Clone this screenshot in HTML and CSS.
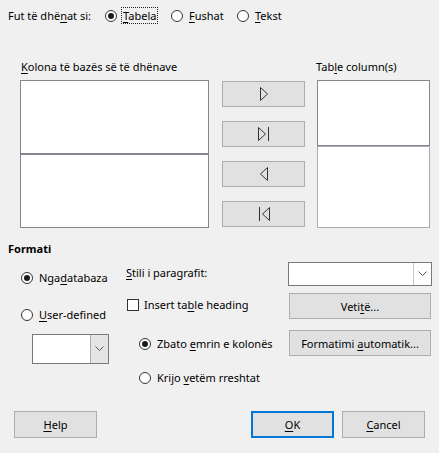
FILE: index.html
```html
<!DOCTYPE html>
<html>
<head>
<meta charset="utf-8">
<link rel="stylesheet" href="styles.css">
</head>
<body>
<div class="dlg">
  <div class="top">
    <span class="top-lbl">Fut të dhë<u>n</u>at si:</span>
    <span class="radio top-item"><span class="rb on"></span><span class="focus"><span><u>T</u>abela</span></span></span>
    <span class="radio top-item"><span class="rb"></span><span class="rtxt"><u>F</u>ushat</span></span>
    <span class="radio"><span class="rb"></span><span class="rtxt"><u>T</u>ekst</span></span>
  </div>

  <div class="cols">
    <div class="col-lbl c1"><u>K</u>olona të bazës së të dhënave</div>
    <div class="col-lbl c3">Tab<u>l</u>e column(s)</div>
    <div class="list left c1">
      <div class="pane lt"></div>
      <div class="pane lb"></div>
    </div>
    <div class="arrows">
      <div class="btn abtn"><svg width="16" height="16" viewBox="0 0 16 16"><polygon points="4.5,1.5 11.5,8 4.5,14.5" fill="none" stroke="#333" stroke-width="1"/></svg></div>
      <div class="btn abtn"><svg width="16" height="16" viewBox="0 0 16 16"><polygon points="2.5,1.5 9.5,8 2.5,14.5" fill="none" stroke="#333" stroke-width="1"/><line x1="12.5" y1="1" x2="12.5" y2="15" stroke="#333" stroke-width="1"/></svg></div>
      <div class="btn abtn"><svg width="16" height="16" viewBox="0 0 16 16"><polygon points="11.5,1.5 4.5,8 11.5,14.5" fill="none" stroke="#333" stroke-width="1"/></svg></div>
      <div class="btn abtn"><svg width="16" height="16" viewBox="0 0 16 16"><line x1="3.5" y1="1" x2="3.5" y2="15" stroke="#333" stroke-width="1"/><polygon points="13.5,1.5 6.5,8 13.5,14.5" fill="none" stroke="#333" stroke-width="1"/></svg></div>
    </div>
    <div class="list right c3">
      <div class="pane rt"></div>
      <div class="pane rb2"></div>
    </div>
  </div>

  <div class="fmt-title">Formati</div>

  <div class="fmt">
    <div class="fcol f1">
      <div class="radio row r-nga"><span class="rb on"></span><span class="rtxt">Nga<u>d</u>atabaza</span></div>
      <div class="radio row r-user"><span class="rb"></span><span class="rtxt"><u>U</u>ser-defined</span></div>
      <div class="combo small"><span class="cfield"></span><span class="cdrop"><svg width="9" height="6" viewBox="0 0 9 6"><polyline points="0.5,0.5 4.5,4.5 8.5,0.5" fill="none" stroke="#555" stroke-width="1"/></svg></span></div>
    </div>
    <div class="fcol f2">
      <div class="row r-stili"><span><u>S</u>tili i paragrafit:</span></div>
      <div class="row r-chk"><span class="cb"></span><span class="ctxt">Insert ta<u>b</u>le heading</span></div>
      <div class="radio row r-zb"><span class="rb on"></span><span class="rtxt">Zbato <u>e</u>mrin e kolonës</span></div>
      <div class="radio row r-kr"><span class="rb"></span><span class="rtxt">Krijo <u>v</u>etëm rreshtat</span></div>
    </div>
    <div class="fcol f3">
      <div class="combo big"><span class="cfield"></span><span class="cdrop"><svg width="9" height="6" viewBox="0 0 9 6"><polyline points="0.5,0.5 4.5,4.5 8.5,0.5" fill="none" stroke="#555" stroke-width="1"/></svg></span></div>
      <div class="btn fbtn b-vet"><span>Veti<u>t</u>ë...</span></div>
      <div class="btn fbtn b-auto"><span>Formatimi <u>a</u>utomatik...</span></div>
    </div>
  </div>

  <div class="footer">
    <div class="btn dbtn"><span><u>H</u>elp</span></div>
    <div class="btn dbtn ok"><span><u>O</u>K</span></div>
    <div class="btn dbtn cancel"><span><u>C</u>ancel</span></div>
  </div>
</div>
</body>
</html>
```

FILE: styles.css
```css
* { box-sizing: border-box; }
html, body { margin: 0; padding: 0; }
body {
  background: #f0f0f0;
  font-family: "Noto Sans", "Open Sans", sans-serif;
  font-size: 11px;
  color: #000;
  width: 439px;
  height: 453px;
  overflow: hidden;
}
u { text-decoration: underline; text-underline-offset: 2px; text-decoration-thickness: 1px; }

.dlg {
  display: flex;
  flex-direction: column;
  height: 453px;
}

/* top row */
.top {
  display: flex;
  align-items: center;
  height: 17px;
  margin-top: 7px;
  padding-left: 8px;
}
.top-lbl { width: 97px; white-space: nowrap; }
.top-item { width: 66px; }
.radio { display: flex; align-items: center; white-space: nowrap; }
.rb {
  width: 12px;
  height: 12px;
  border: 1px solid #333;
  border-radius: 50%;
  background: #fff;
  flex: none;
  display: flex;
  align-items: center;
  justify-content: center;
}
.rb.on::after {
  content: "";
  width: 6px;
  height: 6px;
  border-radius: 50%;
  background: #1a1a1a;
}
.rtxt { margin-left: 6px; line-height: 14px; }
.focus {
  margin-left: 4px;
  border: 1px dotted #222;
  padding: 0 1px;
  height: 17px;
  line-height: 14px;
  display: flex;
  align-items: center;
}

/* columns */
.cols {
  display: grid;
  grid-template-columns: 189px 83px 114px;
  grid-template-rows: 20px 148px;
  column-gap: 12px;
  margin-top: 36px;
  margin-left: 20px;
}
.cols .c3 { grid-column: 3; }
.col-lbl { line-height: 14px; grid-row: 1; white-space: nowrap; }
.col-lbl.c1 { grid-column: 1; margin-left: 1px; }
.cols .arrows { grid-row: 2; grid-column: 2; margin-left: 1px; }
.list { grid-row: 2; display: flex; flex-direction: column; }
.list.left { grid-column: 1; }
.list.right { grid-column: 3; margin-left: 1px; }
.pane { background: #fff; border: 1px solid #828790; }
.lt { height: 74px; }
.lb { height: 74px; }
.rt { height: 66px; }
.rb2 { height: 82px; border-color: #acacb0; }

.btn {
  background: #e1e1e1;
  border: 1px solid #adadad;
  display: flex;
  align-items: center;
  justify-content: center;
  white-space: nowrap;
}
.arrows { display: flex; flex-direction: column; gap: 14px; padding-top: 1px; }
.abtn { width: 83px; height: 26px; }
.abtn svg { display: block; }

/* format */
.fmt-title {
  font-weight: bold;
  margin-top: 14px;
  padding-left: 8px;
  line-height: 14px;
}
.fmt {
  display: flex;
  padding-left: 20px;
}
.fcol { display: flex; flex-direction: column; }
.f1 { width: 106px; }
.f2 { width: 162px; }
.f3 { width: 144px; }
.row { height: 16px; line-height: 16px; display: flex; align-items: center; white-space: nowrap; }
.r-nga { margin-top: 14px; margin-left: 1px; }
.r-user { margin-top: 21px; margin-left: 1px; }
.combo {
  display: flex;
  background: #fff;
  border: 1px solid #7a7a7a;
}
.combo.small { margin-top: 11px; margin-left: 12px; width: 77px; height: 30px; }
.combo.big { margin-top: 6px; width: 144px; height: 24px; }
.cfield { flex: 1; }
.cdrop {
  width: 18px;
  background: #e5e5e5;
  border-left: 1px solid #adadad;
  display: flex;
  align-items: center;
  justify-content: center;
}
.combo.big .cdrop { background: #fff; border-left-color: #c8c8c8; }
.cdrop svg { display: block; }

.r-stili { margin-top: 9px; }
.r-chk { margin-top: 16px; margin-left: 1px; }
.cb { width: 12px; height: 12px; border: 1px solid #333; background: #fff; flex: none; }
.ctxt { margin-left: 5px; }
.r-zb { margin-top: 23px; margin-left: 13px; }
.r-kr { margin-top: 18px; margin-left: 13px; }

.fbtn { margin-left: 1px; width: 142px; height: 26px; }
.b-vet { margin-top: 7px; }
.b-auto { margin-top: 11px; }

/* footer */
.footer {
  margin-top: auto;
  display: flex;
  padding: 0 14px 15px 14px;
}
.dbtn { width: 83px; height: 27px; }
.ok { margin-left: auto; border: 2px solid #0078d7; }
.cancel { margin-left: 8px; }
```
